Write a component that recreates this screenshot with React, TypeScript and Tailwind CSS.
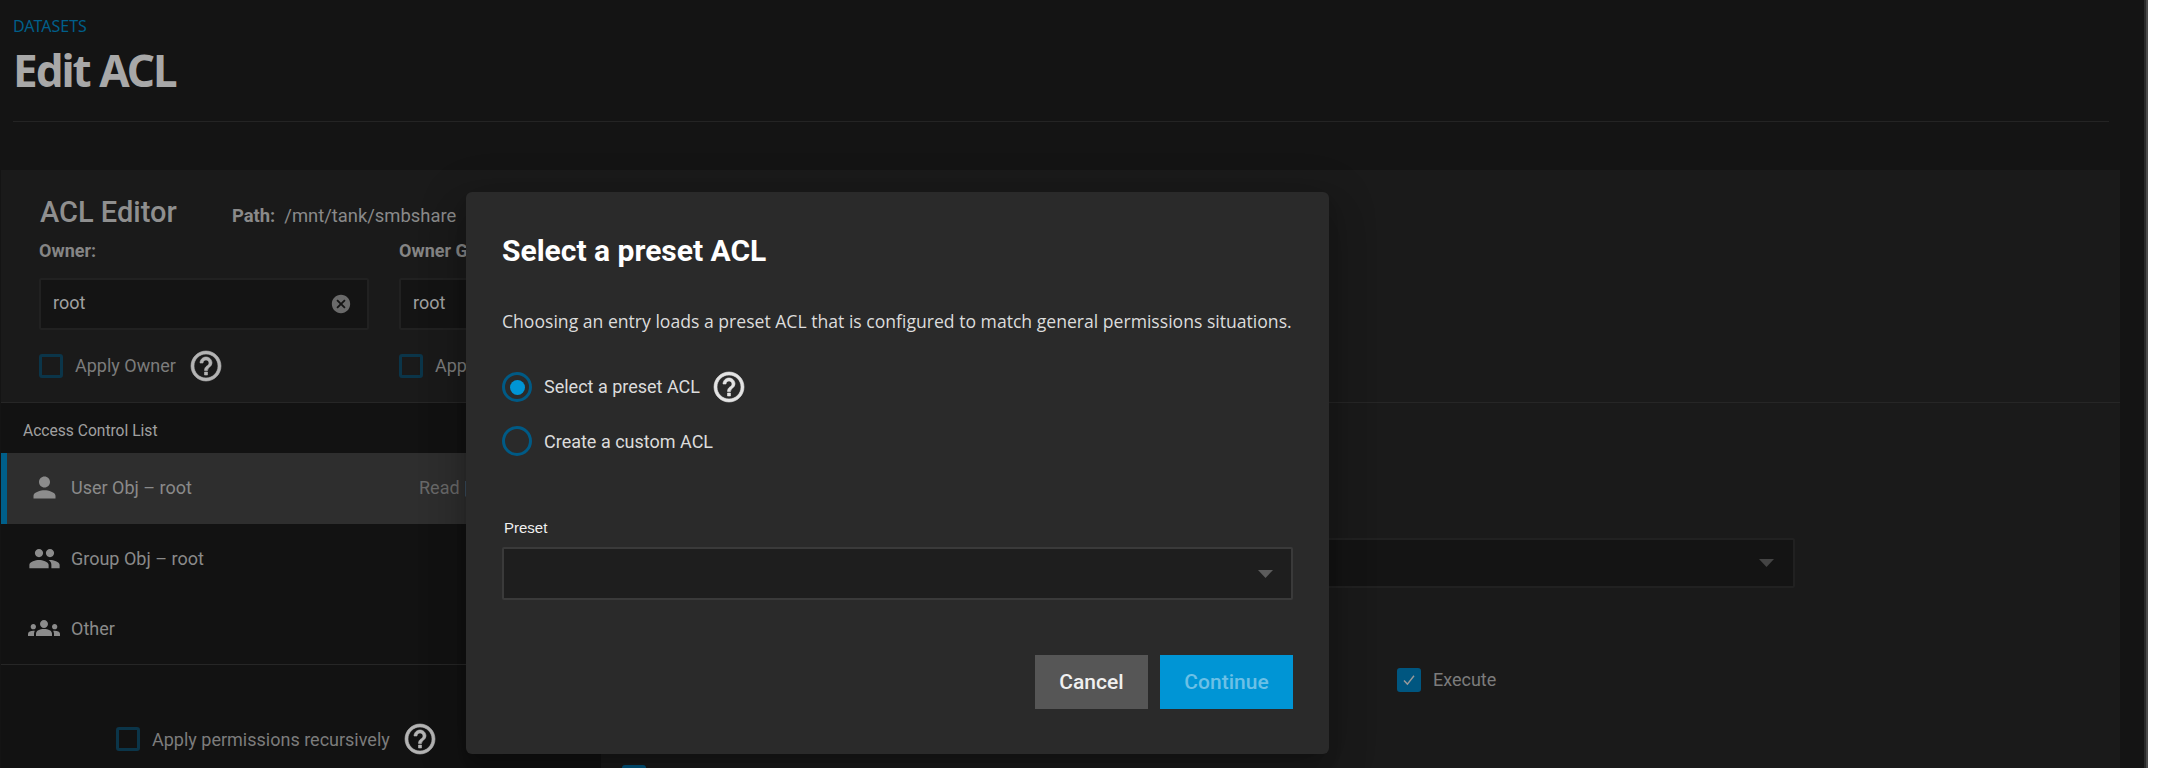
import { MdCancel, MdGroup, MdGroups, MdPerson } from "react-icons/md";

function Checkbox({ checked = false }: { checked?: boolean }) {
  if (checked) {
    return (
      <span className="flex h-6 w-6 shrink-0 items-center justify-center rounded-[3px] bg-[#005680]">
        <svg width="14" height="14" viewBox="0 0 14 14" fill="none" stroke="#9a9a9a" strokeWidth="1.4" aria-hidden>
          <path d="M2 7.5l3.4 3.6L12 2.8" />
        </svg>
      </span>
    );
  }
  return <span className="h-6 w-6 shrink-0 rounded-[3px] border-[3px] border-[#0b3549]" />;
}

function Help({ className = "text-[#b4b4b4]" }: { className?: string }) {
  return (
    <svg width="36" height="36" viewBox="0 0 24 24" fill="currentColor" stroke="currentColor" strokeWidth="0.4" className={`shrink-0 ${className}`} aria-hidden>
      <path d="M11 18h2v-2h-2v2zm1-16C6.48 2 2 6.48 2 12s4.48 10 10 10 10-4.48 10-10S17.52 2 12 2zm0 18c-4.41 0-8-3.59-8-8s3.59-8 8-8 8 3.59 8 8-3.59 8-8 8zm0-14c-2.21 0-4 1.79-4 4h2c0-1.1.9-2 2-2s2 .9 2 2c0 2-3 1.75-3 5h2c0-2.25 3-2.5 3-5 0-2.21-1.79-4-4-4z" />
    </svg>
  );
}

function Radio({ checked = false }: { checked?: boolean }) {
  return (
    <span className="flex h-[30px] w-[30px] shrink-0 items-center justify-center rounded-full border-[3px] border-[#005a85]">
      {checked && <span className="h-[15px] w-[15px] rounded-full bg-[#0095d5]" />}
    </span>
  );
}

function Arrow({ color }: { color: string }) {
  return (
    <svg width="15" height="8" viewBox="0 0 15 8" className="shrink-0" aria-hidden>
      <path d="M0 0h15L7.5 8z" fill={color} />
    </svg>
  );
}

function OwnerField({ label, apply, clear = false }: { label: string; apply: string; clear?: boolean }) {
  return (
    <div className="w-[330px] shrink-0">
      <div className="h-[22px] text-[18px] font-bold leading-[22px] text-[#858585]">{label}</div>
      <div className="mt-[16px] flex h-[52px] items-center justify-between rounded-[2px] border-2 border-[#212121] bg-[#141414] pl-[12px] pr-[15px] text-[18px] text-[#a0a0a0]">
        <span className="pb-[3px]">root</span>
        {clear && <MdCancel size={22} className="text-[#6a6a6a]" />}
      </div>
      <div className="mt-[24px] flex h-[24px] items-center gap-3 text-[18px] text-[#7c7c7c]">
        <Checkbox />
        <span className="pb-[2px]">{apply}</span>
        <Help />
      </div>
    </div>
  );
}

function AclRow({ icon, name, selected = false }: { icon: React.ReactNode; name: string; selected?: boolean }) {
  return (
    <div className={`flex items-center ${selected ? "h-[71px] border-l-[6px] border-[#005f8a] bg-[#2e2e2e]" : "h-[70px]"}`}>
      <div className={`flex w-[70px] shrink-0 items-center justify-center text-[#8c8c8c] ${selected ? "-ml-[6px] -mt-[3px] pl-[16px]" : "pb-[2px] pl-[16px]"}`}>
        {icon}
      </div>
      <span className="pb-[2px] text-[18px] text-[#8a8a8a]">{name}</span>
      {selected && <span className="ml-auto w-[182px] pb-[2px] text-[18px] text-[#696969]">Read | Write | Execute</span>}
    </div>
  );
}

export default function App() {
  return (
    <div className="relative flex h-[768px] w-[2170px] overflow-hidden bg-white font-['Roboto',sans-serif]">
      <main className="flex h-full w-[2144px] shrink-0 flex-col bg-[#141414]">
        <header className="h-[122px] shrink-0 pl-[13px] pr-[35px] pt-[16px]">
          <div className="font-['Noto_Sans',sans-serif] text-[16px] leading-[20px] text-[#005f8a]">DATASETS</div>
          <h1 className="mt-[2px] font-['Noto_Sans',sans-serif] text-[44px] font-bold leading-[64px] tracking-[-2px] text-[#a8a8a8]">Edit ACL</h1>
          <div className="mt-[19px] border-b border-[#242424]" />
        </header>

        <section className="ml-[1px] mt-[48px] flex min-h-0 w-[2119px] flex-1 flex-col bg-[#1a1a1a]">
          <div className="h-[233px] shrink-0 border-b border-[#262626] pl-[38px] pt-[27px]">
            <div className="flex h-[32px] items-center">
              <h2 className="ml-[1px] w-[192px] text-[29px] font-medium text-[#8f8f8f]">ACL Editor</h2>
              <div className="pt-[6px] text-[18.4px] text-[#8a8a8a]">
                <span className="font-bold">Path:</span>
                <span className="ml-[9px]">/mnt/tank/smbshare</span>
              </div>
            </div>
            <div className="mt-[11px] flex gap-[30px]">
              <OwnerField label="Owner:" apply="Apply Owner" clear />
              <OwnerField label="Owner Group:" apply="Apply Group" clear />
            </div>
          </div>

          <div className="flex min-h-0 flex-1">
            <div className="w-[600px] shrink-0 bg-[#121212]">
              <div className="flex h-[50px] items-center pl-[22px] pt-[8px] text-[15.6px] text-[#a0a0a0]">Access Control List</div>
              <AclRow selected icon={<MdPerson size={33} />} name="User Obj – root" />
              <AclRow icon={<MdGroup size={33} />} name="Group Obj – root" />
              <AclRow icon={<MdGroups size={32} />} name="Other" />
              <div className="border-t border-[#262626]" />
              <div className="mt-[62px] flex h-[24px] items-center gap-3 pl-[115px] text-[18px] text-[#7c7c7c]">
                <Checkbox />
                <span>Apply permissions recursively</span>
                <Help />
              </div>
            </div>

            <div className="min-w-0 flex-1 pl-[21px]">
              <div className="mt-[135px] flex h-[50px] w-[1173px] items-center justify-end rounded-[2px] border-2 border-[#212121] bg-[#141414] pr-[19px]">
                <Arrow color="#444444" />
              </div>
              <div className="ml-[775px] mt-[80px] flex h-[24px] items-center gap-[12px] text-[18px] text-[#7c7c7c]">
                <Checkbox checked />
                <span className="pb-[2px]">Execute</span>
              </div>
              <div className="mt-[73px]">
                <Checkbox checked />
              </div>
            </div>
          </div>
        </section>
      </main>
      <div className="h-full w-[2px] shrink-0 bg-[#2a2a2a]" />
      <div className="h-full w-[2px] shrink-0 bg-[#4a4a4a]" />

      <div className="absolute left-[466px] top-[192px] flex h-[562px] w-[863px] flex-col rounded-[6px] bg-[#2a2a2a] pl-[36px] pr-[36px] pt-[43px] shadow-[0_11px_15px_-7px_rgba(0,0,0,0.2),0_24px_38px_3px_rgba(0,0,0,0.14),0_9px_46px_8px_rgba(0,0,0,0.12)]">
        <h2 className="text-[30px] font-bold leading-[32px] text-white">Select a preset ACL</h2>
        <p className="mt-[43px] whitespace-nowrap font-['Open_Sans',sans-serif] text-[17.6px] leading-[22px] text-[#dcdcdc]">
          Choosing an entry loads a preset ACL that is configured to match general permissions situations.
        </p>
        <div className="mt-[37px] flex h-[36px] items-center text-[18px] text-[#dcdcdc]">
          <Radio checked />
          <span className="ml-[12px] pb-[2px]">Select a preset ACL</span>
          <Help className="ml-[11px] text-[#e4e4e4]" />
        </div>
        <div className="mt-[18px] flex h-[36px] items-center text-[18px] text-[#dcdcdc]">
          <Radio />
          <span className="ml-[12px]">Create a custom ACL</span>
        </div>
        <label className="mt-[59px] block pl-[2px] font-['Liberation_Sans',sans-serif] text-[15px] leading-[20px] text-[#f0f0f0]">Preset</label>
        <div className="mt-[9px] flex h-[53px] items-center justify-end rounded-[2px] border-2 border-[#3a3a3a] bg-[#1e1e1e] pr-[18px]">
          <Arrow color="#5c5c5c" />
        </div>
        <div className="mt-[55px] flex justify-end gap-[12px]">
          <button type="button" className="h-[54px] w-[113px] bg-[#565656] pt-[2px] text-[21px] font-medium text-[#f0f0f0]">Cancel</button>
          <button type="button" className="h-[54px] w-[133px] bg-[#0095d5] pt-[2px] text-[21px] font-medium text-[#6cc0e6]">Continue</button>
        </div>
      </div>
    </div>
  );
}
